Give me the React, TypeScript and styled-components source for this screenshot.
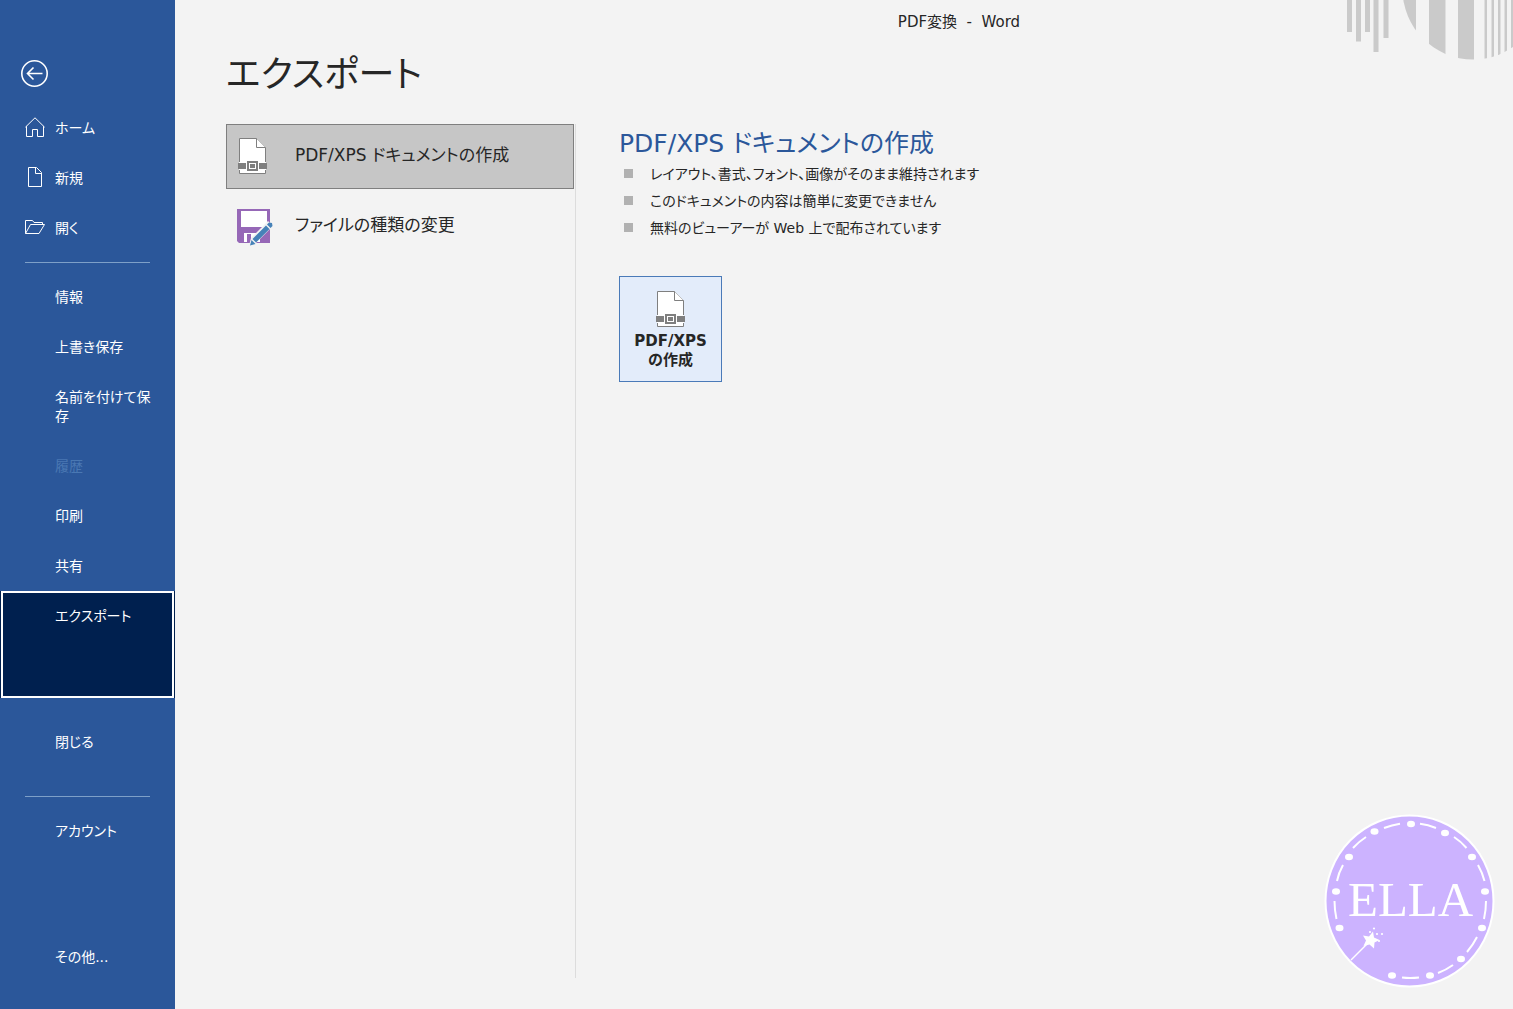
import React from "react";
import styled, { createGlobalStyle } from "styled-components";

const GlobalStyle = createGlobalStyle`
  * { box-sizing: border-box; }
  body {
    margin: 0;
    background: #f3f3f3;
    color: #262626;
    font-family: "DejaVu Sans", "Noto Sans CJK JP", sans-serif;
    font-size: 15px;
    line-height: 19px;
    font-feature-settings: "palt";
  }
  button { font: inherit; font-feature-settings: inherit; color: inherit; cursor: pointer; }
`;

const Page = styled.div`
  display: flex;
  min-height: 100vh;
  position: relative;
`;

const Sidebar = styled.nav`
  flex: 0 0 175px;
  display: flex;
  flex-direction: column;
  background: #2b579a;
  color: #fff;
  padding: 59px 0 27px;
`;

const BackButton = styled.button`
  align-self: flex-start;
  margin: 0 0 15px 20px;
  padding: 0;
  border: 0;
  background: none;
  height: 29px;
  svg { display: block; }
`;

const NavItem = styled.button<{ $active?: boolean }>`
  display: grid;
  grid-template-columns: 30px 1fr;
  align-items: start;
  align-content: start;
  width: ${(p) => (p.$active ? "calc(100% - 2px)" : "100%")};
  min-height: ${(p) => (p.$active ? 107 : 50)}px;
  margin: ${(p) => (p.$active ? "0 1px 19px" : "0")};
  padding: ${(p) => (p.$active ? "14px 22px" : "16px 24px 15px 25px")};
  border: ${(p) => (p.$active ? "2px solid #fff" : "0")};
  background: ${(p) => (p.$active ? "#00204f" : "none")};
  box-shadow: ${(p) => (p.$active ? "-1px 0 #00204f, 1px 0 #00204f" : "none")};
  font-size: 14px;
  text-align: left;
  &:disabled { color: #4a78b3; cursor: default; }
  svg { display: block; margin-top: -2px; }
`;

const NavLabel = styled.span`
  grid-column: 2;
`;

const NavRule = styled.hr<{ $space: number }>`
  width: 125px;
  height: 1px;
  margin: ${(p) => p.$space}px 25px 9px;
  border: 0;
  background: #7ea0c8;
`;

const NavSpacer = styled.div`
  flex: 1;
`;

const Main = styled.main`
  flex: 1;
  min-width: 0;
  display: flex;
  flex-direction: column;
  padding: 13px 51px 31px;
`;

const TitleBar = styled.header`
  padding-left: 230px;
  text-align: center;
  white-space: pre;
`;

const Heading = styled.h1`
  margin: 15px 0 21px;
  font-size: 36px;
  line-height: 56px;
  font-weight: 400;
`;

const Columns = styled.div`
  flex: 1;
  display: grid;
  grid-template-columns: 350px 1fr;
`;

const OptionList = styled.div`
  display: flex;
  flex-direction: column;
  gap: 5px;
  padding-right: 1px;
  border-right: 1px solid #dcdcdc;
`;

const Option = styled.button<{ $selected?: boolean }>`
  display: grid;
  grid-template-columns: 58px 1fr;
  align-items: center;
  height: 65px;
  padding: 0 10px;
  border: 1px solid ${(p) => (p.$selected ? "#7f7f7f" : "transparent")};
  background: ${(p) => (p.$selected ? "#c6c6c6" : "transparent")};
  font-size: 17px;
  line-height: 24px;
  text-align: left;
  svg { display: block; }
`;

const OptionLabel = styled.span`
  padding-bottom: 4px;
`;

const Detail = styled.section`
  padding-left: 43px;
`;

const DetailTitle = styled.h2`
  margin: 0;
  padding-top: 3px;
  font-size: 25px;
  line-height: 34px;
  font-weight: 400;
  color: #2b579a;
`;

const Points = styled.ul`
  margin: 0 0 34px;
  padding: 0 0 0 5px;
  list-style: none;
`;

const Point = styled.li`
  display: flex;
  align-items: center;
  gap: 17px;
  font-size: 14px;
  line-height: 27px;
  &::before {
    content: "";
    width: 9px;
    height: 9px;
    margin-bottom: 2px;
    background: #b1b1b1;
  }
`;

const CreateButton = styled.button`
  display: flex;
  flex-direction: column;
  align-items: center;
  width: 103px;
  height: 106px;
  padding: 14px 0 0;
  border: 1px solid #4a7ab8;
  background: #e3ecfa;
  && { font-weight: 700; }
  svg { margin-bottom: 4px; }
`;

const CornerArt = styled.svg`
  position: absolute;
  top: 0;
  right: 0;
`;

const Badge = styled.svg`
  position: absolute;
  right: 18px;
  bottom: 21px;
`;

const BackIcon = () => (
  <svg width="29" height="29" viewBox="0 0 29 29" fill="none" stroke="#fff" strokeWidth="1.6" aria-hidden="true">
    <circle cx="14.5" cy="14.5" r="12.7" />
    <path d="M22.5 14.5H8M13.500 8.500l-6 6 6 6" />
  </svg>
);

const HomeIcon = () => (
  <svg width="20" height="20" viewBox="0 0 20 20" fill="none" stroke="#fff" aria-hidden="true">
    <path d="M.4 10.2 10 .8l9.600 9.400M1.500 9.200v10.300h6v-7h5v7h6V9.200" />
  </svg>
);

const NewIcon = () => (
  <svg width="20" height="20" viewBox="0 0 20 20" fill="none" stroke="#fff" aria-hidden="true">
    <path d="M3.500.5h8l5 5v14h-13zM10.500.5v6h6" />
  </svg>
);

const OpenIcon = () => (
  <svg width="20" height="20" viewBox="0 0 20 20" fill="none" stroke="#fff" aria-hidden="true">
    <path d="M.5 16.500v-13h7l1.500 2h8.500v2M.5 16.500l5-9h14l-5.500 9z" />
  </svg>
);

const PdfIcon = () => (
  <svg width="31" height="37" viewBox="-1 0 31 37" aria-hidden="true">
    <path d="M1.500.5h17l9 9v26h-26z" fill="#fff" stroke="#7f7f7f" />
    <path d="M18.500.5v9h9" fill="#fff" stroke="#7f7f7f" />
    <path d="M1 24h27v8H1z" fill="#fff" />
    <path d="M0 25h8v6H0zM21 25h8v6h-8z" fill="#7f7f7f" />
    <path d="M10 24h9v8h-9z" fill="#fff" stroke="#7f7f7f" strokeWidth="2" />
    <path d="M12 26h5v4h-5z" fill="#7f7f7f" />
  </svg>
);

const SaveEditIcon = () => (
  <svg width="36" height="38" viewBox="0 0 36 38" aria-hidden="true">
    <path d="M0 1h33v34H2l-2-2z" fill="#9668b7" />
    <path d="M4 3h26v16H4zM7 25h16v9H7z" fill="#fff" />
    <path d="M10 26h4v8h-4z" fill="#9668b7" />
    <path d="M12 38l2-8L31 13l5 5-18 18z" fill="#f3f3f3" />
    <path d="M13 37.500l1.500-5.500 4 4zM15.500 31 29 17.500l3.500 3.500L19 34.500zM30 16.500l2-2 3 .5.5 3-2 2z" fill="#4682b8" />
  </svg>
);

const dots = [
  [96, 19], [59.5, 26.5], [130, 28], [34, 52], [157, 52], [21, 86.5],
  [170, 86.5], [24.5, 123], [167, 123], [146, 154], [77, 170.5], [115, 170.5],
];

const sparkles = [[55, 127], [59, 123.5], [62, 129], [67, 129], [64, 136]];

const EllaBadge = () => (
  <Badge width="171" height="174" viewBox="9 9 171 174" role="img" aria-label="ELLA">
    <ellipse cx="94.500" cy="96" rx="84" ry="85.500" fill="#ccb3ff" stroke="#fff" strokeWidth="2" />
    <g fill="#fff">
      {dots.map(([x, y]) => <ellipse key={`${x}-${y}`} cx={x} cy={y} rx="4" ry="3.300" />)}
      {sparkles.map(([x, y]) => <circle key={`${x}-${y}`} cx={x} cy={y} r="1.100" />)}
      <path d="M58 126.500l1 6 5.500 2.500-5 2.500-.5 6-4.500-4-6 1.500 2.500-5.500-3-5 6 1z" />
    </g>
    <path
      d="M69 23q8-3 16-4.200M105 18.800q8 1 16 4.200M38 43q6-6.500 13-11M139 32q7 4.500 12.500 11M22 76q1.500-8 6-16M163 60q4.500 8 6.500 16M19.500 96q0 9 2 18M171 96q0 9-2 18M152 147q6-7 10-15M123 168q8-3 15-8M87 172.500q8 1 17 0"
      fill="none"
      stroke="#fff"
      strokeWidth="2"
    />
    <path d="M36 155l17-17" stroke="#fff" strokeWidth="1.500" />
    <text x="33" y="111" fill="#fff" fontFamily="'Liberation Serif', serif" fontSize="49">ELLA</text>
  </Badge>
);

const TopArt = () => (
  <CornerArt width="183" height="70" viewBox="0 0 183 70" fill="#cacaca" aria-hidden="true">
    <clipPath id="disc"><circle cx="143" cy="-11" r="70.500" /></clipPath>
    <path d="M17 0h5v32h-5zM26 0h5v41.500h-5zM35 0h5v32h-5zM43.500 0h5v52h-5zM53.500 0h5v38h-5z" />
    <path
      clipPath="url(#disc)"
      d="M70 0h16v70H70zM99 0h16.500v70H99zM128 0h16v70h-16zM154.500 0h2.500v70h-2.500zM161.500 0h2.500v70h-2.500zM168 0h2.500v70H168zM174.500 0h2.500v70h-2.500zM181 0h2v70h-2z"
    />
  </CornerArt>
);

export default function App() {
  return (
    <Page>
      <GlobalStyle />
      <Sidebar>
        <BackButton aria-label="戻る"><BackIcon /></BackButton>
        <NavItem><HomeIcon /><NavLabel>ホーム</NavLabel></NavItem>
        <NavItem><NewIcon /><NavLabel>新規</NavLabel></NavItem>
        <NavItem><OpenIcon /><NavLabel>開く</NavLabel></NavItem>
        <NavRule $space={9} />
        <NavItem><NavLabel>情報</NavLabel></NavItem>
        <NavItem><NavLabel>上書き保存</NavLabel></NavItem>
        <NavItem><NavLabel>名前を付けて保存</NavLabel></NavItem>
        <NavItem disabled><NavLabel>履歴</NavLabel></NavItem>
        <NavItem><NavLabel>印刷</NavLabel></NavItem>
        <NavItem><NavLabel>共有</NavLabel></NavItem>
        <NavItem $active aria-current="page"><NavLabel>エクスポート</NavLabel></NavItem>
        <NavItem><NavLabel>閉じる</NavLabel></NavItem>
        <NavRule $space={29} />
        <NavItem><NavLabel>アカウント</NavLabel></NavItem>
        <NavSpacer />
        <NavItem><NavLabel>その他...</NavLabel></NavItem>
      </Sidebar>
      <Main>
        <TitleBar>PDF変換  -  Word</TitleBar>
        <Heading>エクスポート</Heading>
        <Columns>
          <OptionList>
            <Option $selected><PdfIcon /><OptionLabel>PDF/XPS ドキュメントの作成</OptionLabel></Option>
            <Option><SaveEditIcon /><OptionLabel>ファイルの種類の変更</OptionLabel></Option>
          </OptionList>
          <Detail>
            <DetailTitle>PDF/XPS ドキュメントの作成</DetailTitle>
            <Points>
              <Point>レイアウト、書式、フォント、画像がそのまま維持されます</Point>
              <Point>このドキュメントの内容は簡単に変更できません</Point>
              <Point>無料のビューアーが Web 上で配布されています</Point>
            </Points>
            <CreateButton>
              <PdfIcon />
              <span>PDF/XPS<br />の作成</span>
            </CreateButton>
          </Detail>
        </Columns>
      </Main>
      <TopArt />
      <EllaBadge />
    </Page>
  );
}
